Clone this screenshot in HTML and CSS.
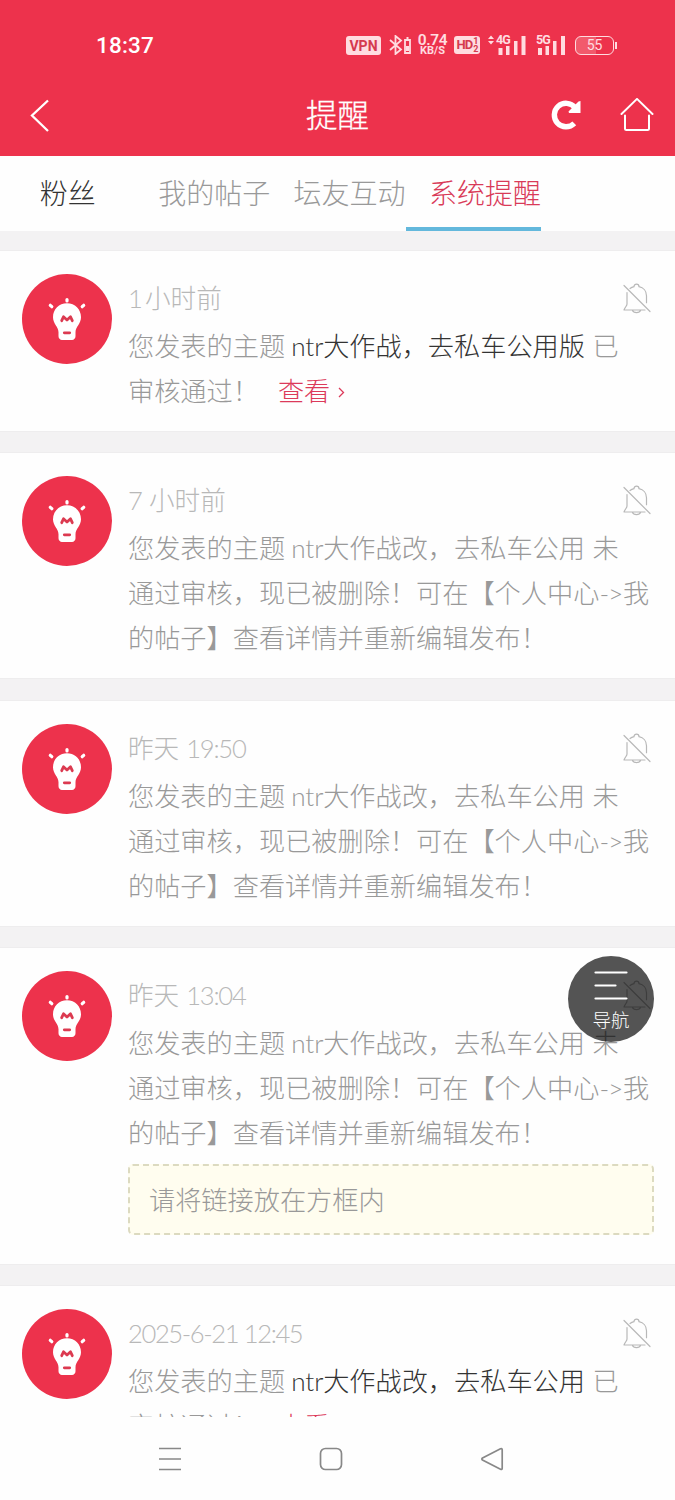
FILE: index.html
```html
<!DOCTYPE html>
<html lang="zh-CN">
<head>
<meta charset="utf-8">
<title>提醒</title>
<link rel="stylesheet" href="styles.css">
</head>
<body>
<svg class="defs" aria-hidden="true">
  <symbol id="bulb" viewBox="0 0 90 90">
    <circle cx="45" cy="45" r="45" fill="#ed324c"/>
    <g stroke="#fff" stroke-width="3.2" stroke-linecap="round"><path d="M45 25.500v1.500M28.300 31.300l1.500 1.400M61.700 31.300l-1.500 1.400"/></g>
    <path fill="#fff" d="M45 29.300c-8 0-14 6-14 14 0 6.500 5.500 9.500 5.500 15v4c0 2 1.500 3.700 3.500 3.700h10c2 0 3.500-1.700 3.500-3.700v-4c0-5.500 5.500-8.500 5.500-15 0-8-6-14-14-14z"/>
    <path fill="none" stroke="#dc3a50" stroke-width="2.800" stroke-linejoin="round" stroke-linecap="round" d="M39.700 46.700l1.800-3.900 3.500 3.200 3.500-3.200 1.800 3.900M42.300 58.800h5.400"/>
  </symbol>
  <symbol id="mute" viewBox="0 0 28 32">
    <path fill="none" stroke="currentColor" stroke-width="1.200" stroke-linejoin="round" stroke-linecap="round" d="M7 6.500c1-.8 2.500-1.500 4-1.800 0-3.500 5-3.500 5 0 4.500.8 7.500 4.500 7.500 9v7M4 10.500v11.500c0 2-2 3-3 6h21M9.500 28.500c1 2.700 7 2.700 8 0M1 3.500l26 26"/>
  </symbol>
</svg>

<header class="top">
  <div class="status">
    <span class="clock">18:37</span>
    <div class="status-icons">
      <span class="vpn">VPN</span>
      <svg class="bt" width="22" height="20" viewBox="0 0 22 20" fill="none" stroke="#ffdce0" stroke-width="1.800"><path d="M1 5l11 9.500-5.500 4.500V1L12 5.500 1 15"/><path d="M16 5h5v13h-5zM17.500 3h2"/><path d="M18.500 11v5" stroke-width="3"/></svg>
      <span class="speed"><b>0.74</b><i>KB/S</i></span>
      <span class="hd">HD<span class="hd-sims"><i>1</i><i>2</i></span></span>
      <span class="signal signal-a"><em>4G</em><svg width="38" height="20" viewBox="0 0 38 20" fill="#ffdce0"><path d="M0 4l3-3.500L6 4zM0 6h6l-3 3.500zM10.500 13h4v7h-4zM18 11h3.500v9H18zM26 6h3.500v14H26zM33.500 1h4v19h-4z"/></svg></span>
      <span class="signal signal-b"><em>5G</em><svg width="29" height="20" viewBox="0 0 29 20" fill="#ffdce0"><path d="M2 13h4v7H2zM9.500 11H13v9H9.500zM17 6h3.500v14H17zM25 1h4v19h-4z"/></svg></span>
      <span class="battery">55</span><span class="battery-tip"></span>
    </div>
  </div>
  <div class="titlebar">
    <svg class="back" width="21" height="34" viewBox="0 0 21 34"><path d="M19 1.500L3 16.500 19 32" fill="none" stroke="#fff" stroke-width="2.300"/></svg>
    <h1>提醒</h1>
    <svg class="reload" width="30" height="30" viewBox="0 0 30 30"><path d="M24 7.500A11.700 11.700 0 1 0 23.300 23.300" fill="none" stroke="#fff" stroke-width="5.400"/><path d="M29.500 1v12H18l-.5-1.500L27.500 1.500z" fill="#fff"/></svg>
    <svg class="home" width="34" height="34" viewBox="0 0 34 34" fill="none" stroke="#fff" stroke-width="2" stroke-linecap="round" stroke-linejoin="round"><path d="M1.500 16L17 .9 32.500 16M5 17.500V30.500q0 1.500 1.500 1.500h21q1.500 0 1.500-1.500V17.500"/></svg>
  </div>
</header>

<nav class="tabs">
  <a class="tab tab-first">粉丝</a>
  <a class="tab">我的帖子</a>
  <a class="tab">坛友互动</a>
  <a class="tab tab-active">系统提醒</a>
</nav>

<main class="feed">
  <article class="card">
    <svg class="avatar"><use href="#bulb"/></svg>
    <div class="content">
      <div class="meta"><time><span class="num">1</span>小时前</time><svg class="mute"><use href="#mute"/></svg></div>
      <p>您发表的主题<a class="topic"><span class="ntr">ntr</span>大作战，去私车公用版</a>已</p>
      <p>审核通过！<a class="view">查看<svg class="more" width="7" height="11" viewBox="0 0 7 11"><path d="M1 1l4.500 4.500L1 10" fill="none" stroke="currentColor" stroke-width="1.300"/></svg></a></p>
    </div>
  </article>
  <article class="card">
    <svg class="avatar"><use href="#bulb"/></svg>
    <div class="content">
      <div class="meta"><time><span class="num num-wide">7</span>小时前</time><svg class="mute"><use href="#mute"/></svg></div>
      <p>您发表的主题<span class="plain"><span class="ntr">ntr</span>大作战改，去私车公用</span>未</p>
      <p>通过审核，现已被删除！可在【个人中心<span class="arrow">-&gt;</span>我</p>
      <p>的帖子】查看详情并重新编辑发布！</p>
    </div>
  </article>
  <article class="card">
    <svg class="avatar"><use href="#bulb"/></svg>
    <div class="content">
      <div class="meta"><time>昨天 <span class="hour">19:50</span></time><svg class="mute"><use href="#mute"/></svg></div>
      <p>您发表的主题<span class="plain"><span class="ntr">ntr</span>大作战改，去私车公用</span>未</p>
      <p>通过审核，现已被删除！可在【个人中心<span class="arrow">-&gt;</span>我</p>
      <p>的帖子】查看详情并重新编辑发布！</p>
    </div>
  </article>
  <article class="card card-quote">
    <svg class="avatar"><use href="#bulb"/></svg>
    <div class="content">
      <div class="meta"><time>昨天 <span class="hour">13:04</span></time><svg class="mute"><use href="#mute"/></svg></div>
      <p>您发表的主题<span class="plain"><span class="ntr">ntr</span>大作战改，去私车公用</span>未</p>
      <p>通过审核，现已被删除！可在【个人中心<span class="arrow">-&gt;</span>我</p>
      <p>的帖子】查看详情并重新编辑发布！</p>
      <blockquote>请将链接放在方框内</blockquote>
    </div>
  </article>
  <article class="card">
    <svg class="avatar"><use href="#bulb"/></svg>
    <div class="content">
      <div class="meta"><time class="date">2025-6-21 12:45</time><svg class="mute"><use href="#mute"/></svg></div>
      <p>您发表的主题<a class="topic"><span class="ntr">ntr</span>大作战改，去私车公用</a>已</p>
      <p>审核通过！<a class="view">查看</a></p>
    </div>
  </article>
</main>

<button class="fab">
  <svg width="34" height="30" viewBox="0 0 34 30" stroke="#fff" stroke-width="2.200" stroke-linecap="round"><path d="M1.500 1.500h31M1.500 14.500h20M1.500 27.500h31"/></svg>
  <span>导航</span>
</button>

<footer class="sysnav">
  <svg width="24" height="24" viewBox="0 0 24 24"><path d="M1 1.500h22M1 12h22M1 22.500h22"/></svg>
  <svg width="24" height="24" viewBox="0 0 24 24"><rect x="1.500" y="1.500" width="21" height="21" rx="5"/></svg>
  <svg width="24" height="24" viewBox="0 0 24 24"><path d="M2.500 11L20.500 1.800q1.700-.7 1.700 1v18.400q0 1.700-1.700 1L2.500 13q-1.300-1 0-2z"/></svg>
</footer>
</body>
</html>
```
FILE: styles.css
```css
* { box-sizing: border-box; }
html, body { height: 1500px; overflow: hidden; }
body {
  margin: 0;
  width: 675px;
  background: #f3f2f3;
  font-family: Lato, "Noto Sans CJK SC", sans-serif;
  font-weight: 300;
  color: #999;
}
.defs { position: absolute; width: 0; height: 0; }

.top { height: 156px; background: #ed324c; color: #fff; }
.status { display: flex; align-items: center; height: 75px; padding: 15px 58px 0 96px; justify-content: space-between; }
.clock { font: 500 22.500px/28px Roboto, sans-serif; letter-spacing: .2px; }
.status-icons { display: flex; align-items: center; color: #ffdce0; font-family: Roboto, sans-serif; height: 30px; }
.vpn { width: 35px; height: 19px; border-radius: 3px; background: #ffdce0; color: #d53a4e; font: 700 14px/20px Roboto, sans-serif; text-align: center; }
.bt { margin-left: 8px; }
.speed { display: flex; flex-direction: column; width: 31px; margin-left: 6px; align-items: center; }
.speed b { font: 600 15.500px/13px Roboto, sans-serif; letter-spacing: -.4px; }
.speed i { font: 700 11px/10px Roboto, sans-serif; margin-top: -1px; }
.hd { display: flex; align-items: center; justify-content: center; width: 26px; height: 18px; margin-left: 6px; border-radius: 3px; background: #ffdce0; color: #d53a4e; font: 700 13px/18px Roboto, sans-serif; letter-spacing: -1px; }
.hd-sims { display: flex; flex-direction: column; margin-left: 1px; }
.hd-sims i { font: 700 9px/8px Roboto, sans-serif; }
.signal { position: relative; display: flex; }
.signal em { position: absolute; top: -2px; font: 700 12.500px/13px Roboto, sans-serif; letter-spacing: -1px; }
.signal-a { margin-left: 8px; }
.signal-a em { left: 8px; }
.signal-b { margin-left: 10px; }
.signal-b em { left: 0; }
.battery { width: 39px; height: 19px; margin-left: 10px; border: 1.500px solid #ffdce0; border-radius: 6px; background: linear-gradient(90deg, #f25a6c 55%, transparent 55%); font: 400 14px/17px Roboto, sans-serif; text-align: center; }
.battery-tip { width: 2px; height: 7px; margin-left: 1px; background: #ffdce0; }

.titlebar { display: grid; grid-template-columns: 275px 125px 150px 70px 55px; height: 81px; align-items: center; }
.back { margin-left: 29px; }
h1 { margin: 0 0 2px; font-size: 31.500px; line-height: 44px; font-weight: 300; text-align: center; -webkit-text-stroke: .3px #fff; }
.reload { grid-column: 4; margin: 0 0 2px 1px; }
.home { margin-bottom: 1px; }

.tabs { display: flex; height: 75px; background: #fefefe; }
.tab { width: 135.300px; padding-left: 23px; font-size: 28px; line-height: 74px; white-space: nowrap; }
.tab-first { padding-left: 0; text-align: center; color: #333; }
.tab-active { color: #d93a58; border-bottom: 4px solid #63b8dc; }

.feed { display: flex; flex-direction: column; gap: 22.500px; padding-top: 19.500px; }
.card { display: flex; flex: none; padding: 23px 21px 17px 22px; background: #fefefe; box-shadow: 0 0 0 1px #eeedee; }
.card-quote { padding-bottom: 28.500px; }
.avatar { flex: none; width: 90px; height: 90px; margin-right: 16px; }
.content { flex: 1; min-width: 0; font-size: 26.200px; }
.meta { display: flex; justify-content: space-between; height: 50px; padding-right: 3px; color: #b8b8b8; }
time { font-size: 25.600px; line-height: 49px; }
.num { display: inline-block; width: 17px; }
.num-wide { width: 21px; }
.hour { letter-spacing: -1.200px; }
.date { letter-spacing: -1.400px; }
.mute { width: 28px; height: 32px; margin-top: 8px; }
p { margin: 0; height: 45px; line-height: 45px; white-space: nowrap; }
.topic, .plain { margin: 0 7.500px 0 6px; }
.topic { color: #333; }
.ntr { display: inline-block; width: 32px; }
.view { margin-left: 19px; color: #dc3a5a; }
.more { margin: 0 0 3px 8px; }
.arrow { display: inline-block; width: 23.500px; letter-spacing: -1px; }
blockquote { margin: 8px 0 0; height: 71px; padding-left: 19px; border: 1.500px dashed #dcdac0; border-width: 2px; border-radius: 5px; background: #fffdef; line-height: 69px; }

.fab { position: absolute; left: 568px; top: 956px; width: 86px; height: 86px; padding: 15px 0 0; border: 0; border-radius: 50%; background: rgba(0, 0, 0, .67); color: #fff; display: flex; flex-direction: column; align-items: center; font: 300 18.500px/24px Lato, "Noto Sans CJK SC", sans-serif; }
.fab span { margin-top: 7px; }

.sysnav { position: absolute; left: 0; right: 0; top: 1417px; height: 83px; background: #fefefe; display: flex; align-items: center; justify-content: center; gap: 137px; padding-right: 13px; }
.sysnav svg { fill: none; stroke: #888; stroke-width: 1.700; }
```
